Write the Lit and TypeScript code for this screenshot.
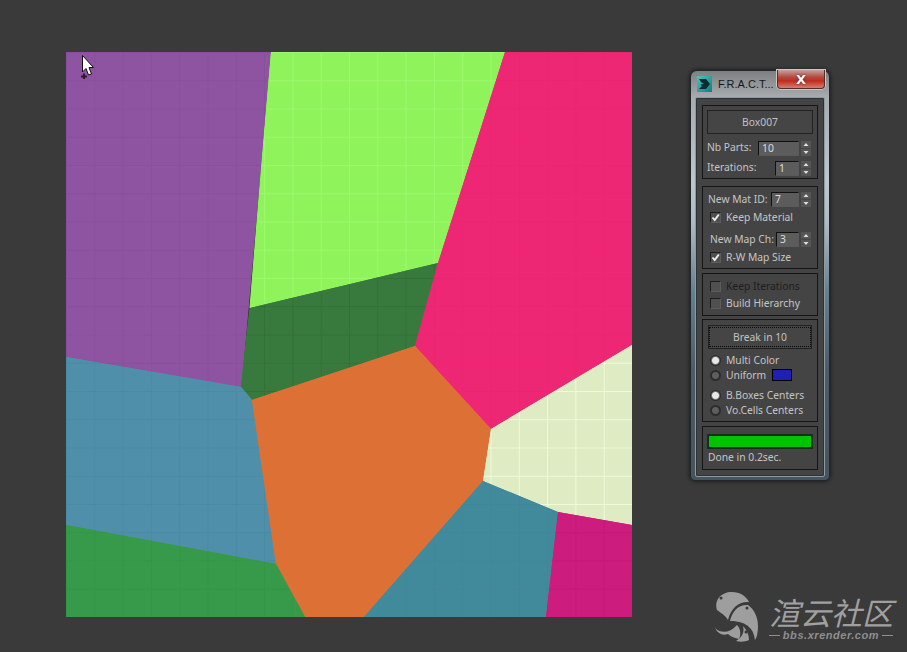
import { LitElement, html, css, svg } from "lit";
import { customElement } from "lit/decorators.js";

interface Cell { id: string; fill: string; line: string; pts: string; }

const CELLS: Cell[] = [
  { id: "a", fill: "#8f54a1", line: "#8a4f9c", pts: "66,52 271,52 241,387 66,357" },
  { id: "b", fill: "#8ff45b", line: "#9bf86c", pts: "271,52 505,52 438,263 250,308" },
  { id: "c", fill: "#387a3d", line: "#327037", pts: "250,308 438,263 415,346 252,400 241,387" },
  { id: "d", fill: "#ee2775", line: "#ec2472", pts: "505,52 632,52 632,345 491,429 415,346 438,263" },
  { id: "e", fill: "#4f8fa9", line: "#4b8aa4", pts: "66,357 241,387 252,400 276,564 66,525" },
  { id: "f", fill: "#dc7035", line: "#dc7035", pts: "252,400 415,346 491,429 483,481 364,617 305,617 276,564" },
  { id: "g", fill: "#379a4a", line: "#339545", pts: "66,525 276,564 305,617 66,617" },
  { id: "h", fill: "#deebc3", line: "#f1fad8", pts: "632,345 632,525 558,512 483,481 491,429" },
  { id: "i", fill: "#418a9c", line: "#3f8799", pts: "483,481 558,512 546,617 364,617" },
  { id: "j", fill: "#cc1c7d", line: "#c5187a", pts: "558,512 632,525 632,617 546,617" },
];

@customElement("app-root")
export class AppRoot extends LitElement {
  static styles = css`
    :host { display: block; width: 907px; height: 652px; }
    .page {
      position: relative; width: 907px; height: 652px; overflow: hidden; background: #3a3a3a;
      display: flex; align-items: flex-start; padding: 52px 0 0 66px; box-sizing: border-box;
      font-family: "Noto Sans", "Liberation Sans", sans-serif; font-size: 10.3px; color: #c4c4c4;
    }
    .view { display: block; width: 566px; height: 565px; flex: none; }
    .cursor { position: absolute; left: 81px; top: 54px; width: 14px; height: 26px; }

    .win {
      flex: none; width: 140px; height: 411px; margin: 18px 0 0 58px; box-sizing: border-box; position: relative;
      border-radius: 7px 7px 5px 5px; border: 1px solid #20262a; padding: 26px 4px 4px;
      background: linear-gradient(180deg, #7d7f81 0, #a8acae 26px, #bcc6cc 110px, #b0bcc4 150px, #66808f 220px, #4c5c68 300px, #46545e 100%);
      box-shadow: 0 0 4px #111;
    }
    .title { position: absolute; left: 6px; top: 5px; display: flex; align-items: center; gap: 6px; color: #15181a; font: 11px "Liberation Sans", sans-serif; }
    .ico { width: 15px; height: 16px; display: block; }
    .close {
      position: absolute; right: 4px; top: -1px; width: 48px; height: 19px; box-sizing: border-box;
      border: 1px solid #5a2a26; border-top: 0; border-radius: 0 0 4px 4px;
      background: linear-gradient(180deg, #c9a19c 0, #b04a40 40%, #c42a1c 60%, #d08070 100%);
      box-shadow: 0 0 0 1px #c8c8c8; display: flex; align-items: center; justify-content: center;
      color: #fff; font: bold 13px "DejaVu Sans", sans-serif; text-shadow: 0 0 2px #401010;
    }
    .inner {
      height: 380px; box-sizing: border-box; background: #444; border: 1px solid #8d9aa2; border-radius: 2px;
      box-shadow: inset 0 0 0 1px #2c3236; padding: 7px 6px; display: flex; flex-direction: column;
    }
    .group { border: 1px solid #151515; box-sizing: border-box; display: flex; flex-direction: column; flex: none; position: relative; background: #444; }
    .g1 { height: 74px; padding: 4px 4px 0 4px; margin-bottom: 7px; }
    .g2 { height: 83px; padding: 4px 4px 0 5px; margin-bottom: 4px; }
    .g3 { height: 43px; padding: 4px 6px 0 7px; margin-bottom: 3px; }
    .g4 { height: 103px; padding: 5px 5px 0 5px; margin-bottom: 4px; }
    .g5 { height: 44px; padding: 7px 4px 0 4px; }

    .btn { height: 24px; box-sizing: border-box; border: 1px solid #222; background: #454545; display: flex; align-items: center; justify-content: center; color: #c2c2c2; flex: none; }
    .dotted { width: 100%; height: 20px; border: 1px dotted #0c0c0c; box-sizing: border-box; display: flex; align-items: center; justify-content: center; }
    .row { display: flex; align-items: center; height: 16px; flex: none; white-space: nowrap; }
    .lab { flex: 1; }
    .up { margin-bottom: 2px; }
    .input {
      height: 15px; box-sizing: border-box; border: 1px solid #111; border-right-color: #5a5a5a; border-bottom-color: #5a5a5a;
      background: #5c5c5c; color: #dcdcdc; padding-left: 3px; line-height: 13px; flex: none;
    }
    .spin { width: 10px; height: 15px; margin-left: 2px; flex: none; display: block; margin-right: 2px; }
    .check { width: 11px; height: 11px; box-sizing: border-box; border: 1px solid #1c1c1c; border-right-color: #5c5c5c; border-bottom-color: #5c5c5c; background: #505050; margin-right: 5px; flex: none; display: block; }
    .radio { width: 11px; height: 11px; border-radius: 50%; margin-right: 5px; flex: none; box-sizing: border-box; background: radial-gradient(circle, #5e5e5e 0 3px, #2c2c2c 4px); }
    .radio.on { background: radial-gradient(circle, #e8e8e8 0 3px, #6a6a6a 4px, #2c2c2c 5px); }
    .dim { color: #1e1e1e; }
    .swatch { width: 20px; height: 12px; box-sizing: border-box; border: 1px solid #000; background: #1f1fb0; margin-left: 6px; flex: none; }
    .bar { height: 15px; box-sizing: border-box; border: 2px solid #1c2c1c; background: #00c400; flex: none; }
    .done { margin: 0 0 0 1px; height: 15px; display: flex; align-items: center; }

    .logo { position: absolute; left: 714px; top: 590px; display: flex; align-items: flex-start; gap: 7px; color: #9b9b9b; }
    .mark { width: 46px; height: 52px; display: block; flex: none; }
    .brand { display: flex; flex-direction: column; align-items: center; width: 128px; margin-top: 6px; }
    .cn { font: italic 31px/31px "Noto Sans CJK SC", sans-serif; height: 31px; white-space: nowrap; color: #a0a0a0; }
    .url { font: italic bold 11px/13px "Liberation Sans", sans-serif; margin-top: 2px; display: flex; align-items: center; gap: 3px; letter-spacing: 0.55px; color: #8f8f8f; }
    .url i { display: block; width: 11px; height: 1px; background: #8f8f8f; }
  `;

  private spin() {
    return html`<svg class="spin" viewBox="0 0 10 15"><rect width="10" height="7" fill="#555"/><rect y="8" width="10" height="7" fill="#555"/><path d="M5 2 7.5 5h-5zM5 13 2.5 10h5z" fill="#e0e0e0"/></svg>`;
  }
  private check(on: boolean) {
    return html`<svg class="check" viewBox="0 0 9 9">${on ? svg`<path d="M1.5 4.5 3.7 7 7.8 1.5" fill="none" stroke="#f2f2f2" stroke-width="1.8"/>` : ""}</svg>`;
  }

  render() {
    return html`<div class="page">
      <svg class="view" viewBox="66 52 566 565">
        <defs>
          ${CELLS.map((c) => svg`<pattern id="p${c.id}" patternUnits="userSpaceOnUse" x="66" y="52" width="28.3" height="28.25">
            <rect width="28.3" height="28.25" fill="${c.fill}"/>
            <path d="M.5 0V28.25M0 .5H28.3" stroke="${c.line}" stroke-width="1" fill="none" shape-rendering="crispEdges"/>
          </pattern>`)}
        </defs>
        ${CELLS.map((c) => svg`<polygon points="${c.pts}" fill="${c.fill}" stroke="${c.fill}" stroke-width="1"/>`)}
        ${CELLS.map((c) => svg`<polygon points="${c.pts}" fill="url(#p${c.id})"/>`)}
      </svg>

      <svg class="cursor" viewBox="0 0 14 26">
        <path d="M1.500 1.500V18L5 14.500 7.500 21 10.500 20 8 13.500H12.500Z" fill="#fff" stroke="#111" stroke-width="1"/>
        <path d="M2 25V23.500H0V21.500H2V19.500H4V21.500H6V23.500H4V25Z" fill="#2a1a30"/>
      </svg>

      <div class="win">
        <div class="title">
          <svg class="ico" viewBox="0 0 15 16">
            <defs><linearGradient id="ig" x1="0" y1="0" x2="1" y2="1"><stop offset="0" stop-color="#4ec4c0"/><stop offset="1" stop-color="#0e7f80"/></linearGradient></defs>
            <rect width="15" height="16" fill="url(#ig)"/>
            <path d="M2 3H9L13 8 9 13H2L5 10 3.500 8.500 7 8 4 6Z" fill="#0c2c30"/>
          </svg>
          <span>F.R.A.C.T...</span>
        </div>
        <div class="close">X</div>
        <div class="inner">
          <div class="group g1">
            <div class="btn">Box007</div>
            <div class="row" style="margin-top:6px">
              <span class="lab up">Nb Parts:</span><span class="input" style="width:41px">10</span>${this.spin()}
            </div>
            <div class="row" style="margin-top:4px">
              <span class="lab up">Iterations:</span><span class="input" style="width:24px">1</span>${this.spin()}
            </div>
          </div>

          <div class="group g2">
            <div class="row"><span class="lab">New Mat ID:</span><span class="input" style="width:28px">7</span>${this.spin()}</div>
            <div class="row" style="margin:2px 0 0 2px">${this.check(true)}<span>Keep Material</span></div>
            <div class="row" style="margin:6px 0 0 2px"><span class="lab">New Map Ch:</span><span class="input" style="width:23px">3</span>${this.spin()}</div>
            <div class="row" style="margin:2px 0 0 2px">${this.check(true)}<span>R-W Map Size</span></div>
          </div>

          <div class="group g3">
            <div class="row">${this.check(false)}<span class="dim">Keep Iterations</span></div>
            <div class="row" style="margin-top:1px">${this.check(false)}<span>Build Hierarchy</span></div>
          </div>

          <div class="group g4">
            <div class="btn"><span class="dotted">Break in 10</span></div>
            <div class="row" style="margin:3px 0 0 2px"><span class="radio on"></span><span>Multi Color</span></div>
            <div class="row" style="margin-top:-1px;margin-left:2px"><span class="radio"></span><span>Uniform</span><span class="swatch"></span></div>
            <div class="row" style="margin:4px 0 0 2px"><span class="radio on"></span><span>B.Boxes Centers</span></div>
            <div class="row" style="margin-top:-1px;margin-left:2px"><span class="radio"></span><span>Vo.Cells Centers</span></div>
          </div>

          <div class="group g5">
            <div class="bar"></div>
            <div class="done">Done in 0.2sec.</div>
          </div>
        </div>
      </div>

      <div class="logo">
        <svg class="mark" viewBox="3 2 46 52" fill="#9e9e9e">
          <path d="M6 22C3 12 10 4 21 4 29 4 35 8 38 14 28 13 20 20 17 32 14 27 10 25 6 22Z"/>
          <path d="M19 33C21 23 28 16 37 17 43 21 47 29 47 38 47 44 46 49 44 52 43 43 38 33 19 33Z"/>
          <path d="M4 40C10 46 19 45 26 37 30 41 30 47 28 51 24 50 20 49 17 46 12 48 7 46 4 40Z"/>
          <path d="M32 38C36 42 38 47 38 52 34 54 29 54 25 53 30 50 34 45 32 38Z"/>
          <circle cx="10" cy="10" r="1.500" fill="#3a3a3a"/><circle cx="36" cy="20" r="1.500" fill="#3a3a3a"/>
          <circle cx="17" cy="49" r="1.500" fill="#3a3a3a"/><circle cx="35" cy="44" r="1.500" fill="#3a3a3a"/>
        </svg>
        <div class="brand">
          <div class="cn">渲云社区</div>
          <div class="url"><i></i>bbs.xrender.com<i></i></div>
        </div>
      </div>
    </div>`;
  }
}
